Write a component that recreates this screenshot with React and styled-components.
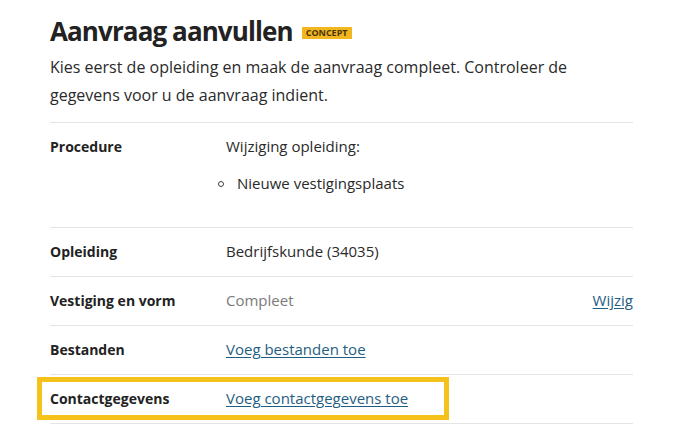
import React from "react";
import styled, { createGlobalStyle } from "styled-components";

const GlobalStyle = createGlobalStyle`
  html, body {
    margin: 0;
    padding: 0;
    background: #ffffff;
  }
  body {
    font-family: "Open Sans", "Noto Sans", "Liberation Sans", sans-serif;
    color: #222;
  }
`;

const Page = styled.main`
  width: 583px;
  padding: 12px 0 0 50px;
`;

const TitleRow = styled.div`
  display: flex;
  align-items: center;
  gap: 9px;
`;

const Title = styled.h1`
  margin: 0;
  font-size: 26px;
  line-height: 38px;
  font-weight: 700;
  color: #222;
  letter-spacing: -0.9px;
`;

const Badge = styled.span`
  display: inline-block;
  background: #f2b71f;
  color: #4a3408;
  font-size: 9px;
  font-weight: 700;
  line-height: 12px;
  padding: 0 4px;
  margin-top: 3px;
`;

const Intro = styled.p`
  margin: 3px 0 0;
  font-size: 16px;
  line-height: 28px;
  color: #2a2a2a;
  padding-bottom: 13px;
  border-bottom: 1px solid #e4e4e4;
`;

const Row = styled.div`
  position: relative;
  display: grid;
  grid-template-columns: 176px 1fr auto;
  align-items: start;
  padding: ${(p) => (p.$tall ? "13px 0 33px" : "13px 0 14px")};
  border-bottom: 1px solid #e4e4e4;

  ${(p) =>
    p.$highlight &&
    `
    &::after {
      content: "";
      position: absolute;
      left: -13px;
      width: 412px;
      top: 2px;
      bottom: 3px;
      box-sizing: border-box;
      border: 5px solid #f5c21b;
      pointer-events: none;
    }
  `}
`;

const Label = styled.div`
  font-size: 14px;
  line-height: 21px;
  font-weight: 700;
  color: #222;
`;

const Value = styled.div`
  font-size: 15px;
  line-height: 21px;
  color: ${(p) => (p.$muted ? "#7a7a7a" : "#2a2a2a")};
`;

const Bullets = styled.ul`
  margin: 16px 0 0 -8px;
  padding: 0;
  list-style: none;
`;

const Bullet = styled.li`
  display: flex;
  align-items: center;
  gap: 13px;

  &::before {
    content: "";
    width: 4px;
    height: 4px;
    border: 1px solid #444;
    border-radius: 50%;
    margin-top: 1px;
  }
`;

const Link = styled.a`
  font-size: 15px;
  line-height: 21px;
  color: #1f5e82;
  text-decoration: underline;
  text-underline-offset: 2px;
  cursor: pointer;
`;

export default function App() {
  return (
    <>
      <GlobalStyle />
      <Page>
        <TitleRow>
          <Title>Aanvraag aanvullen</Title>
          <Badge>CONCEPT</Badge>
        </TitleRow>
        <Intro>
          Kies eerst de opleiding en maak de aanvraag compleet. Controleer de
          gegevens voor u de aanvraag indient.
        </Intro>

        <Row $tall>
          <Label>Procedure</Label>
          <Value>
            Wijziging opleiding:
            <Bullets>
              <Bullet>Nieuwe vestigingsplaats</Bullet>
            </Bullets>
          </Value>
        </Row>

        <Row>
          <Label>Opleiding</Label>
          <Value>Bedrijfskunde (34035)</Value>
        </Row>

        <Row>
          <Label>Vestiging en vorm</Label>
          <Value $muted>Compleet</Value>
          <Link>Wijzig</Link>
        </Row>

        <Row>
          <Label>Bestanden</Label>
          <Value>
            <Link>Voeg bestanden toe</Link>
          </Value>
        </Row>

        <Row $highlight>
          <Label>Contactgegevens</Label>
          <Value>
            <Link>Voeg contactgegevens toe</Link>
          </Value>
        </Row>
      </Page>
    </>
  );
}
